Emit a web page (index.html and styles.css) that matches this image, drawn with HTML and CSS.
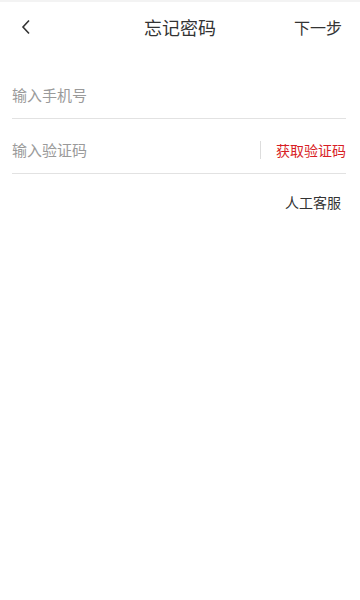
FILE: index.html
```html
<!DOCTYPE html>
<html lang="zh-CN">
<head>
    <meta charset="UTF-8">
    <meta name="viewport" content="width=device-width, initial-scale=1.0">
    <title>忘记密码</title>
    <link rel="stylesheet" href="styles.css">
</head>
<body>
    <div class="header">
        <span class="back">
            <svg width="12" height="16" viewBox="0 0 12 16"><path d="M9 1.5 L3 8 L9 14.5" fill="none" stroke="#333" stroke-width="1.6"/></svg>
        </span>
        <span class="title">忘记密码</span>
        <span class="next">下一步</span>
    </div>

    <div class="form">
        <div class="field">
            <input type="text" placeholder="输入手机号">
        </div>
        <div class="field">
            <input type="text" placeholder="输入验证码">
            <span class="sep"></span>
            <span class="get-code">获取验证码</span>
        </div>
        <div class="service">人工客服</div>
    </div>
</body>
</html>
```

FILE: styles.css
```css
body {
    margin: 0;
    padding: 0;
    background: #fff;
    font-family: "Noto Sans CJK SC", "Noto Sans", sans-serif;
    color: #333;
    border-top: 2px solid #f3f3f3;
}
.header {
    display: flex;
    align-items: center;
    justify-content: space-between;
    height: 50px;
    padding: 0 18px 0 20px;
    position: relative;
}
.back {
    display: flex;
    width: 12px;
}
.title {
    position: absolute;
    left: 0;
    right: 0;
    text-align: center;
    font-size: 18px;
    color: #333;
    pointer-events: none;
}
.next {
    font-size: 16px;
    color: #333;
}
.form {
    padding: 0 14px 0 12px;
}
.field {
    display: flex;
    align-items: center;
    box-sizing: border-box;
    height: 55px;
    padding-top: 7px;
    border-bottom: 1px solid #e2e2e2;
}
.field:first-child {
    margin-top: 12px;
}
.field input {
    flex: 1;
    border: none;
    outline: none;
    padding: 0;
    font-family: inherit;
    font-size: 15px;
    color: #333;
    background: transparent;
}
.field input::placeholder {
    color: #9a9a9a;
}
.sep {
    width: 1px;
    height: 18px;
    background: #ddd;
    margin-right: 15px;
}
.get-code {
    font-size: 14px;
    color: #d81e25;
}
.service {
    text-align: right;
    font-size: 14px;
    color: #333;
    padding: 18px 5px 0 0;
}
```
